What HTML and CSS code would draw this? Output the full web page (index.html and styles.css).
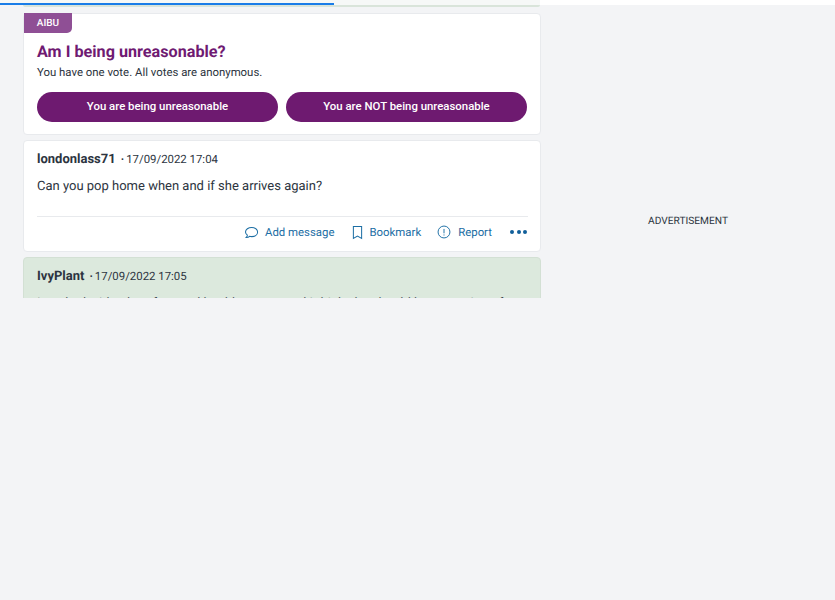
FILE: index.html
```html
<!DOCTYPE html>
<html lang="en">
<head>
<meta charset="utf-8">
<title>AIBU</title>
<link rel="stylesheet" href="styles.css">
</head>
<body>
<div class="progress"><div class="progress-bar"></div></div>
<div class="page">
  <main class="thread">
    <div class="prev-edge"></div>
    <section class="card vote">
      <div class="tag">AIBU</div>
      <h1 class="vote-title">Am I being unreasonable?</h1>
      <p class="vote-note">You have one vote. All votes are anonymous.</p>
      <div class="vote-buttons">
        <button class="vote-btn">You are being unreasonable</button>
        <button class="vote-btn">You are NOT being unreasonable</button>
      </div>
    </section>
    <article class="card post">
      <div class="post-head"><strong class="author">londonlass71</strong><span class="dot">·</span><span class="date">17/09/2022 17:04</span></div>
      <p class="post-body">Can you pop home when and if she arrives again?</p>
      <div class="post-actions">
        <a class="action action-msg">
          <svg class="icon" viewBox="0 0 16 16" width="15" height="15" fill="none" stroke="currentColor" stroke-width="1.1"><path d="M8.200 2.600c3.500 0 6.300 2 6.300 4.900s-2.800 4.900-6.300 4.900c-.8 0-1.500-.1-2.200-.3-.8.8-2 1.200-3.600 1.200.7-.7 1.100-1.500 1.200-2.400C2.400 9.900 1.600 8.800 1.600 7.500c0-2.900 3.100-4.900 6.600-4.900z"/></svg>
          Add message</a>
        <a class="action action-bookmark">
          <svg class="icon" viewBox="0 0 12 16" width="11" height="15" fill="none" stroke="currentColor" stroke-width="1.1"><path d="M1.500 1.500h9v13L6 11.800 1.500 14.500z"/></svg>
          Bookmark</a>
        <a class="action action-report">
          <svg class="icon" viewBox="0 0 16 16" width="14" height="14" fill="none" stroke="currentColor" stroke-width="1.1"><circle cx="8" cy="8" r="6.800"/><path d="M8 4.500v5M8 10.800v1.200"/></svg>
          Report</a>
        <span class="more"><i></i><i></i><i></i></span>
      </div>
    </article>
    <article class="card post post-op">
      <div class="post-head"><strong class="author">IvyPlant</strong><span class="dot">·</span><span class="date">17/09/2022 17:05</span></div>
      <p class="post-body">I worked with a lot of mental health nurses and I think she should be accepting of your</p>
    </article>
  </main>
  <aside class="side"><div class="ad">ADVERTISEMENT</div></aside>
</div>
</body>
</html>
```
FILE: styles.css
```css
* { box-sizing: border-box; }
html, body { margin: 0; height: 100%; }
body {
  background: #f3f4f6;
  font-family: Roboto, "Liberation Sans", sans-serif;
  color: #2c3440;
  overflow: hidden;
  text-rendering: geometricPrecision;
}
.progress { height: 5px; padding-top: 3px; background: linear-gradient(90deg, #f6f8f7 0 540px, #fff 540px); }
.progress-bar { width: 334px; height: 2px; background: #1a7de8; }
.page {
  display: flex;
  height: 293px;
  overflow: hidden;
}
.thread { width: 518px; margin-left: 23px; flex: none; }
.prev-edge {
  height: 1.500px;
  width: 517px;
  margin-bottom: 6.500px;
  background: #d9e4da;
  border-radius: 0 0 3px 3px;
}
.card {
  background: #fff;
  border: 1px solid #e8eaed;
  border-radius: 4px;
  width: 518px;
  margin-bottom: 5px;
}
.vote { height: 122px; padding: 0 13px; }
.tag {
  width: 48px;
  height: 20px;
  margin-left: -13px;
  margin-top: -1px;
  padding-top: 1px;
  background: #8f4f95;
  color: #fff;
  font-size: 10px;
  font-weight: 500;
  line-height: 20px;
  text-align: center;
  border-radius: 0 0 5px 0;
}
.vote-title {
  margin: 9px 0 0;
  font-size: 16.200px;
  line-height: 20px;
  font-weight: 700;
  color: #6f1a72;
}
.vote-note { margin: 2px 0 0; font-size: 11.400px; line-height: 16px; color: #2c3440; }
.vote-buttons { display: flex; gap: 8px; margin-top: 12px; width: 490px; }
.vote-btn {
  flex: 1;
  height: 30px;
  padding: 0 0 2px;
  border: 0;
  border-radius: 15px;
  background: #6e1a70;
  color: #fff;
  font: 500 11.400px/28px Roboto, sans-serif;
}
.post { padding: 0 13px; height: 112px; }
.post-head { display: flex; align-items: center; height: 16px; margin-top: 10px; font-size: 11.400px; }
.author { font-size: 13px; font-weight: 700; color: #2c3440; }
.dot { margin: 0 2px 0 5px; font-weight: 700; }
.date { color: #2c3440; }
.post-body { margin: 10px 0 0; font-size: 13px; line-height: 20px; color: #2c3440; white-space: nowrap; }
.post-actions {
  display: flex;
  align-items: center;
  justify-content: flex-end;
  width: 491px;
  height: 32px;
  margin-top: 19px;
  padding: 0 1px 1px 0;
  border-top: 1px solid #e8eaed;
  color: #1c6ea4;
  font-size: 11.400px;
}
.action { display: flex; align-items: center; gap: 6px; color: #1c6ea4; }
.action-bookmark { gap: 6px; margin-left: 18px; }
.action-report { gap: 7px; margin-left: 16px; }
.icon { display: block; flex: none; }
.more { display: flex; gap: 2.500px; margin-left: 18px; }
.more i { width: 4px; height: 4px; border-radius: 50%; background: #115f9a; }
.post-op { background: #dce9dd; border-color: #d3e0d4; height: 60px; }
.post-op .post-body { overflow: hidden; }
.side { flex: 1; display: flex; justify-content: center; padding-top: 210px; }
.ad { font-size: 10.200px; line-height: 14px; color: #2c3440; }
```
